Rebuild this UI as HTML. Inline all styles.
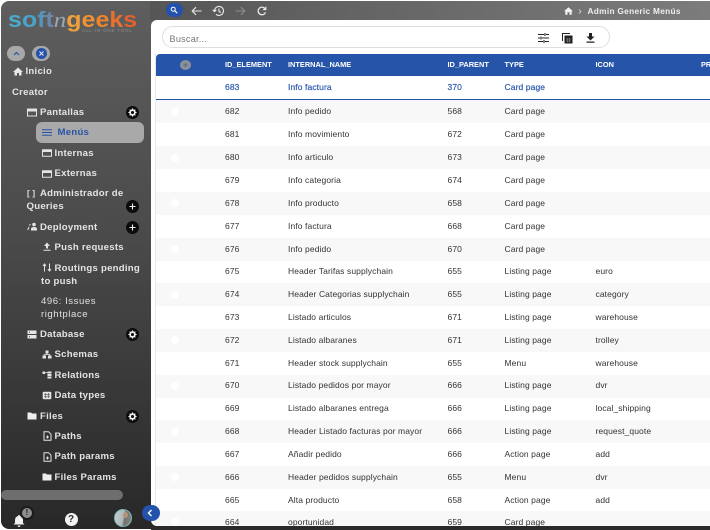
<!DOCTYPE html>
<html lang="es"><head><meta charset="utf-8"><title>Admin Generic Menús</title>
<style>
*{box-sizing:border-box}
html,body{margin:0;padding:0;background:#fff}
#f{position:relative;width:710px;height:530px;overflow:hidden;font-family:"Liberation Sans",sans-serif;background:#fff}
#bg{position:absolute;left:1px;top:1px;width:720px;height:528px;border-radius:8px;background:linear-gradient(180deg,#5e5e5e 0,#4a4a4a 45%,#282828 100%)}
#top{position:absolute;left:150px;top:1px;width:560px;height:19px;background:linear-gradient(90deg,#565656,#7c7c7c)}
#panel{position:absolute;left:151px;top:20px;width:559px;height:506px;background:#fff;border-radius:6px 0 0 6px;overflow:hidden}
.a{position:absolute;white-space:nowrap}
.s{position:absolute;color:#e4e4e4;font-size:9.6px;font-weight:bold;line-height:13px;white-space:nowrap;letter-spacing:.25px}
.n{font-weight:normal;letter-spacing:.55px;color:#e0e0e0}
.r{position:absolute;left:156px;width:554px;height:23px}
.g{background:#f8f8f8}
.c{position:absolute;font-size:8.5px;line-height:10px;color:#333;white-space:nowrap;letter-spacing:.1px}
.h{position:absolute;font-size:7.4px;line-height:10px;color:#fff;font-weight:bold;white-space:nowrap;top:60px}
.b{color:#2f5cae;-webkit-text-stroke:.2px #2f5cae}
.w{position:absolute;left:171px;width:8px;height:8px;border-radius:50%;background:#fff}
svg{position:absolute;display:block}
.btn{position:absolute;width:13px;height:13px;border-radius:50%;background:#0c0c0c}
</style></head><body><div id="f">
<div id="bg"></div><div id="top"></div><div id="panel"></div>

<!-- logo -->
<div class="a" style="left:8px;top:5px;font-size:22.500px;line-height:30px;font-weight:bold;transform:scaleX(1.11);transform-origin:0 0"><span style="color:#4aa9cf">s</span><span style="color:#4aa3ca">o</span><span style="color:#5694bd">f</span><span style="color:#6b88ab">t</span><span style="font-family:'Liberation Serif',serif;font-style:italic;font-weight:normal;color:#9aa7b6">n</span><span style="color:#eea03a">g</span><span style="color:#ee9234">e</span><span style="color:#ec842f">e</span><span style="color:#e8722d">k</span><span style="color:#e2622c">s</span></div>
<div class="a" style="left:82px;top:28px;font-size:4.6px;line-height:6px;color:#8d8d8d;letter-spacing:.75px">ALL-IN-ONE TOOL</div>

<!-- top buttons -->
<div class="a" style="left:7px;top:46px;width:18px;height:15px;border-radius:8px;background:#a8a8a8"></div>
<svg style="left:13px;top:51px" width="7" height="5" viewBox="0 0 7 5"><path d="M1 4 3.500 1.500 6 4" fill="none" stroke="#2855a8" stroke-width="1.200"/></svg>
<div class="a" style="left:32px;top:46px;width:18px;height:15px;border-radius:8px;background:#a8a8a8"></div>
<div class="a" style="left:36px;top:48px;width:11px;height:11px;border-radius:50%;background:#2351ab"></div>
<svg style="left:38px;top:50px" width="7" height="7" viewBox="0 0 7 7"><path d="M1.500 1.500l4 4M5.500 1.500l-4 4" stroke="#dfe6f5" stroke-width="1.100"/></svg>

<!-- sidebar items -->
<svg style="left:13px;top:67px" width="10" height="9" viewBox="0 0 10 9"><path d="M5 .5 0 5h1.500v3.500h2.500V6h2v2.500h2.500V5H10z" fill="#e8e8e8"/></svg>
<div class="s" style="left:25.500px;top:65px">Inicio</div>
<div class="s" style="left:12px;top:85.500px">Creator</div>

<svg style="left:27px;top:108px" width="10" height="9" viewBox="0 0 10 9"><path d="M.5 1h9v7h-9z" fill="none" stroke="#e4e4e4" stroke-width="1"/><path d="M.5 1h9v2.500h-9z" fill="#e4e4e4"/></svg>
<div class="s" style="left:40px;top:105.500px">Pantallas</div>
<div class="btn" style="left:126px;top:106px"></div>
<svg style="left:128px;top:108px" width="9" height="9" viewBox="0 0 9 9"><circle cx="4.500" cy="4.500" r="2.400" fill="none" stroke="#eee" stroke-width="1.700"/><path d="M4.500.4v1.200M4.500 7.400v1.200M.4 4.500h1.200M7.400 4.500h1.200M1.600 1.600l.9.9M6.500 6.500l.9.9M1.600 7.400l.9-.9M6.500 2.500l.9-.9" stroke="#eee" stroke-width="1.100"/></svg>

<div class="a" style="left:36px;top:122px;width:108px;height:21px;border-radius:6px;background:#a9a9a9"></div>
<svg style="left:42px;top:129px" width="10" height="7" viewBox="0 0 10 7"><path d="M0 .8h10M0 3.500h10M0 6.200h10" stroke="#2855a8" stroke-width="1"/></svg>
<div class="s" style="left:57.500px;top:126px;color:#2855a8">Menús</div>

<svg style="left:41.500px;top:149px" width="10" height="8" viewBox="0 0 10 8"><path d="M.5.700h9v6.600h-9z" fill="none" stroke="#e4e4e4" stroke-width="1"/><path d="M.5.700h9v2.300h-9z" fill="#e4e4e4"/></svg>
<div class="s" style="left:54.500px;top:146.500px">Internas</div>
<svg style="left:41.500px;top:169.500px" width="10" height="8" viewBox="0 0 10 8"><path d="M.5.700h9v6.600h-9z" fill="none" stroke="#e4e4e4" stroke-width="1"/><path d="M.5.700h9v2.300h-9z" fill="#e4e4e4"/></svg>
<div class="s" style="left:54.500px;top:167px">Externas</div>

<div class="s" style="left:27px;top:187px;font-size:8px">[ ]</div>
<div class="s" style="left:40px;top:187px">Administrador de</div>
<div class="s" style="left:26.500px;top:200px">Queries</div>
<div class="btn" style="left:126px;top:200px"></div>
<svg style="left:128px;top:202px" width="9" height="9" viewBox="0 0 9 9"><path d="M4.500 1.500v6M1.500 4.500h6" stroke="#eee" stroke-width="1.100"/></svg>

<svg style="left:27px;top:222px" width="11" height="9" viewBox="0 0 11 9"><circle cx="7" cy="2.500" r="1.800" fill="#e4e4e4"/><path d="M4 8.500V7q0-2 3-2t3 2v1.500z" fill="#e4e4e4"/><path d="M.7 8 2 5M2.500 3.500 3.200 2" stroke="#e4e4e4" stroke-width="1"/></svg>
<div class="s" style="left:40px;top:220.500px">Deployment</div>
<div class="btn" style="left:126px;top:220.500px"></div>
<svg style="left:128px;top:222.500px" width="9" height="9" viewBox="0 0 9 9"><path d="M4.500 1.500v6M1.500 4.500h6" stroke="#eee" stroke-width="1.100"/></svg>

<svg style="left:43px;top:242px" width="8" height="9" viewBox="0 0 8 9"><path d="M4 .5 7 4H5v2.500H3V4H1zM.5 7.700h7v1h-7z" fill="#e4e4e4"/></svg>
<div class="s" style="left:54.500px;top:241px">Push requests</div>

<svg style="left:42px;top:263px" width="10" height="9" viewBox="0 0 10 9"><path d="M2.500 8.500v-7M1 3l1.500-2L4 3M7.500.500v7M6 6l1.500 2L9 6" fill="none" stroke="#e4e4e4" stroke-width="1"/></svg>
<div class="s" style="left:54.500px;top:261.500px">Routings pending</div>
<div class="s" style="left:41px;top:274.500px">to push</div>
<div class="s n" style="left:41px;top:294.500px">496: Issues</div>
<div class="s n" style="left:41px;top:307.500px">rightplace</div>

<svg style="left:27px;top:329.500px" width="10" height="9" viewBox="0 0 10 9"><path d="M.5.500h9v3.500h-9zM.5 5h9v3.500h-9z" fill="#e8e8e8"/><path d="M2 2.200h1M2 6.700h1" stroke="#444"/></svg>
<div class="s" style="left:40px;top:327.500px">Database</div>
<div class="btn" style="left:126px;top:328px"></div>
<svg style="left:128px;top:330px" width="9" height="9" viewBox="0 0 9 9"><circle cx="4.500" cy="4.500" r="2.400" fill="none" stroke="#eee" stroke-width="1.700"/><path d="M4.500.4v1.200M4.500 7.400v1.200M.4 4.500h1.200M7.400 4.500h1.200M1.600 1.600l.9.9M6.500 6.500l.9.9M1.600 7.400l.9-.9M6.500 2.500l.9-.9" stroke="#eee" stroke-width="1.100"/></svg>

<svg style="left:42px;top:350px" width="10" height="9" viewBox="0 0 10 9"><path d="M3.500.500h3v3h-3zM.5 5.500h3.500v3H.5zM6 5.500h3.500v3H6z" fill="#e4e4e4"/><path d="M5 3v2M2.200 5.500V4.500h5.600v1" fill="none" stroke="#e4e4e4" stroke-width=".8"/></svg>
<div class="s" style="left:54.500px;top:348px">Schemas</div>
<svg style="left:42px;top:371px" width="10" height="8" viewBox="0 0 10 8"><path d="M.5.500h2.500v2.500H.5zM5.500.500h4v2H5.500zM5.500 3h4v2H5.500zM5.500 5.500h4v2H5.500z" fill="#e4e4e4"/><path d="M3 1.700h2.500" stroke="#e4e4e4" stroke-width=".8"/></svg>
<div class="s" style="left:54.500px;top:368.500px">Relations</div>
<svg style="left:42px;top:391px" width="10" height="9" viewBox="0 0 10 9"><rect x=".7" y=".7" width="8.600" height="7.600" rx="1" fill="#e4e4e4"/><path d="M2 3.300h6M2 5.800h6M3.700 2v5M6.500 2v5" stroke="#555" stroke-width=".7"/></svg>
<div class="s" style="left:54.500px;top:389px">Data types</div>

<svg style="left:27px;top:411.500px" width="10" height="8" viewBox="0 0 10 8"><path d="M.5.500h3.500l1 1h4.500v6h-9z" fill="#eee"/></svg>
<div class="s" style="left:40px;top:409.500px">Files</div>
<div class="btn" style="left:126px;top:409.500px"></div>
<svg style="left:128px;top:411.500px" width="9" height="9" viewBox="0 0 9 9"><circle cx="4.500" cy="4.500" r="2.400" fill="none" stroke="#eee" stroke-width="1.700"/><path d="M4.500.4v1.200M4.500 7.400v1.200M.4 4.500h1.200M7.400 4.500h1.200M1.600 1.600l.9.9M6.500 6.500l.9.9M1.600 7.400l.9-.9M6.500 2.500l.9-.9" stroke="#eee" stroke-width="1.100"/></svg>

<svg style="left:42.500px;top:431px" width="9" height="10" viewBox="0 0 9 10"><path d="M1 .7h4.500L8 3.200v6H1zM3 6h3M4.500 4.500v3" fill="none" stroke="#e4e4e4" stroke-width="1"/></svg>
<div class="s" style="left:54.500px;top:429.500px">Paths</div>
<svg style="left:42.500px;top:451.500px" width="9" height="10" viewBox="0 0 9 10"><path d="M1 .7h4.500L8 3.200v6H1zM3 6h3M4.500 4.500v3" fill="none" stroke="#e4e4e4" stroke-width="1"/></svg>
<div class="s" style="left:54.500px;top:450px">Path params</div>
<svg style="left:41.500px;top:472.500px" width="10" height="8" viewBox="0 0 10 8"><path d="M.5.500h3.500l1 1h4.500v6h-9z" fill="#eee"/></svg>
<div class="s" style="left:54.500px;top:470.500px">Files Params</div>

<!-- scroll -->
<div class="a" style="left:1px;top:490px;width:122px;height:10px;border-radius:5px;background:#6e6e6e"></div>

<!-- footer -->
<svg style="left:13px;top:514px" width="12" height="13" viewBox="0 0 12 13"><path d="M6 1a1 1 0 0 1 1 1q3 1 3 4v3l1.500 1.500H.5L2 9V6q0-3 3-4a1 1 0 0 1 1-1zM4.500 11.500h3Q7.300 13 6 13t-1.500-1.500z" fill="#f0f0f0"/></svg>
<div class="a" style="left:20px;top:506px;width:14px;height:14px;border-radius:50%;background:#1b1b1b"></div>
<div class="a" style="left:22px;top:508px;width:10px;height:10px;border-radius:50%;background:#8e8e8e"></div>
<div class="a" style="left:22px;top:508px;width:10px;height:10px;font-size:8px;line-height:10px;font-weight:bold;color:#222;text-align:center">!</div>
<div class="a" style="left:64.500px;top:513px;width:13px;height:13px;border-radius:50%;background:#f2f2f2;color:#2a2a2a;font-size:10px;line-height:13px;font-weight:bold;text-align:center">?</div>
<div class="a" style="left:114px;top:509px;width:18px;height:18px;border-radius:50%;background:linear-gradient(100deg,#c4cfd0 0,#aeb8b8 50%,#6d7470 60%,#8a8580 100%);border:1px solid #7fb7b5"></div>
<div class="a" style="left:122.500px;top:512px;width:5px;height:6px;border-radius:50%;background:#b5927c"></div>

<!-- top bar -->
<div class="a" style="left:165.500px;top:3px;width:17px;height:14px;border-radius:7px;background:#2351ab"></div>
<svg style="left:170px;top:6px" width="8" height="8" viewBox="0 0 8 8"><circle cx="3.200" cy="3.200" r="2" fill="none" stroke="#fff" stroke-width="1"/><path d="M4.700 4.700 7.200 7.200" stroke="#fff" stroke-width="1.100"/></svg>
<svg style="left:191px;top:6px" width="11" height="10" viewBox="0 0 11 10"><path d="M10.500 5H1.500M5 1.200 1.200 5 5 8.800" fill="none" stroke="#e8e8e8" stroke-width="1.100"/></svg>
<svg style="left:212px;top:5px" width="13" height="12" viewBox="0 0 13 12"><path d="M2.500 6a4.500 4.500 0 1 1 1.500 3.300M.7 4.800l1.800 1.800 1.800-1.800M7 3.500V6.500l2 1" fill="none" stroke="#e8e8e8" stroke-width="1.100"/></svg>
<svg style="left:235px;top:6px" width="11" height="10" viewBox="0 0 11 10"><path d="M.5 5h9M6 1.200 9.800 5 6 8.800" fill="none" stroke="#8e8e8e" stroke-width="1.100"/></svg>
<svg style="left:257px;top:6px" width="10" height="10" viewBox="0 0 10 10"><path d="M8.500 6.300A3.800 3.800 0 1 1 8 2.700M8.800.8v2.700H6.100" fill="none" stroke="#ededed" stroke-width="1.200"/></svg>
<svg style="left:564px;top:7px" width="9" height="8" viewBox="0 0 9 8"><path d="M4.500.3 0 4.200h1.300v3.500h2.200V5.200h2v2.500h2.200V4.200H9z" fill="#f2f2f2"/></svg>
<svg style="left:578px;top:9px" width="4" height="5" viewBox="0 0 4 5"><path d="M1 .5 3 2.500 1 4.500" fill="none" stroke="#ddd" stroke-width=".8"/></svg>
<div class="a" style="left:587.500px;top:6px;font-size:8.300px;line-height:11px;font-weight:bold;color:#eee;letter-spacing:.3px">Admin Generic Menús</div>

<!-- search -->
<div class="a" style="left:162px;top:26px;width:448px;height:22px;border:1px solid #dedede;border-radius:11px;background:#fff"></div>
<div class="a" style="left:169.500px;top:33px;font-size:9.100px;line-height:12px;color:#757575;letter-spacing:.25px">Buscar...</div>
<svg style="left:538px;top:33px" width="11" height="10" viewBox="0 0 11 10"><path d="M0 1.500h6M8 1.500h3M7 0v3M0 5h2M4 5h7M3 3.500v3M0 8.500h5M7 8.500h4M6 7v3" stroke="#222" stroke-width="1.100"/></svg>
<svg style="left:562px;top:33px" width="11" height="11" viewBox="0 0 11 11"><path d="M2.500 2.500h8v8h-8z" fill="#222"/><path d="M.5 8V.5H8" fill="none" stroke="#222"/><path d="M4 6h5M4 8h5M5.700 5v4.500M7.500 5v4.500" stroke="#999" stroke-width=".5"/></svg>
<svg style="left:586px;top:33px" width="9" height="10" viewBox="0 0 9 10"><path d="M3 0h3v3.500h2.500L4.500 7.500.5 3.500H3zM.5 8.500h8v1.200h-8z" fill="#222"/></svg>

<!-- left hairline -->
<div class="a" style="left:155px;top:54px;width:1px;height:472px;background:#e8e8e8"></div>

<!-- header -->
<div class="a" style="left:156px;top:54px;width:554px;height:22px;background:#2654a8;border-radius:4px 0 0 0"></div>
<div class="a" style="left:180px;top:60px;width:11px;height:10px;border-radius:50%;background:#8a8f9a"></div>
<svg style="left:182px;top:62px" width="7" height="6" viewBox="0 0 7 6"><path d="M1.500 3h4M3.500 1v4" stroke="#5e6b85"/></svg>
<div class="h" style="left:225px">ID_ELEMENT</div>
<div class="h" style="left:288px">INTERNAL_NAME</div>
<div class="h" style="left:447.500px">ID_PARENT</div>
<div class="h" style="left:504.500px">TYPE</div>
<div class="h" style="left:595.500px">ICON</div>
<div class="h" style="left:701px">PR</div>

<!-- selected row -->
<div class="a" style="left:156px;top:99px;width:554px;height:1px;background:#2654a8"></div>
<div class="c b" style="left:225px;top:82px">683</div>
<div class="c b" style="left:288px;top:82px">Info factura</div>
<div class="c b" style="left:447.500px;top:82px">370</div>
<div class="c b" style="left:504.500px;top:82px">Card page</div>

<!-- zebra -->
<div class="r g" style="top:100px"></div>
<div class="r g" style="top:146px"></div>
<div class="r g" style="top:192px"></div>
<div class="r g" style="top:237.500px"></div>
<div class="r g" style="top:283px"></div>
<div class="r g" style="top:329px"></div>
<div class="r g" style="top:374.500px"></div>
<div class="r g" style="top:420px"></div>
<div class="r g" style="top:466px"></div>
<div class="r g" style="top:511px;height:15px"></div>

<!-- faint gears -->
<div class="w" style="top:108px"></div>
<div class="w" style="top:154px"></div>
<div class="w" style="top:199px"></div>
<div class="w" style="top:245px"></div>
<div class="w" style="top:291px"></div>
<div class="w" style="top:336px"></div>
<div class="w" style="top:382px"></div>
<div class="w" style="top:428px"></div>
<div class="w" style="top:473px"></div>
<div class="w" style="top:518px"></div>

<!-- rows -->
<div class="c" style="left:225px;top:106px">682</div><div class="c" style="left:288px;top:106px">Info pedido</div><div class="c" style="left:447.500px;top:106px">568</div><div class="c" style="left:504.500px;top:106px">Card page</div>
<div class="c" style="left:225px;top:129px">681</div><div class="c" style="left:288px;top:129px">Info movimiento</div><div class="c" style="left:447.500px;top:129px">672</div><div class="c" style="left:504.500px;top:129px">Card page</div>
<div class="c" style="left:225px;top:152px">680</div><div class="c" style="left:288px;top:152px">Info articulo</div><div class="c" style="left:447.500px;top:152px">673</div><div class="c" style="left:504.500px;top:152px">Card page</div>
<div class="c" style="left:225px;top:175px">679</div><div class="c" style="left:288px;top:175px">Info categoria</div><div class="c" style="left:447.500px;top:175px">674</div><div class="c" style="left:504.500px;top:175px">Card page</div>
<div class="c" style="left:225px;top:198px">678</div><div class="c" style="left:288px;top:198px">Info producto</div><div class="c" style="left:447.500px;top:198px">658</div><div class="c" style="left:504.500px;top:198px">Card page</div>
<div class="c" style="left:225px;top:221px">677</div><div class="c" style="left:288px;top:221px">Info factura</div><div class="c" style="left:447.500px;top:221px">668</div><div class="c" style="left:504.500px;top:221px">Card page</div>
<div class="c" style="left:225px;top:244px">676</div><div class="c" style="left:288px;top:244px">Info pedido</div><div class="c" style="left:447.500px;top:244px">670</div><div class="c" style="left:504.500px;top:244px">Card page</div>
<div class="c" style="left:225px;top:266px">675</div><div class="c" style="left:288px;top:266px">Header Tarifas supplychain</div><div class="c" style="left:447.500px;top:266px">655</div><div class="c" style="left:504.500px;top:266px">Listing page</div><div class="c" style="left:595.500px;top:266px">euro</div>
<div class="c" style="left:225px;top:289px">674</div><div class="c" style="left:288px;top:289px">Header Categorias supplychain</div><div class="c" style="left:447.500px;top:289px">655</div><div class="c" style="left:504.500px;top:289px">Listing page</div><div class="c" style="left:595.500px;top:289px">category</div>
<div class="c" style="left:225px;top:312px">673</div><div class="c" style="left:288px;top:312px">Listado articulos</div><div class="c" style="left:447.500px;top:312px">671</div><div class="c" style="left:504.500px;top:312px">Listing page</div><div class="c" style="left:595.500px;top:312px">warehouse</div>
<div class="c" style="left:225px;top:335px">672</div><div class="c" style="left:288px;top:335px">Listado albaranes</div><div class="c" style="left:447.500px;top:335px">671</div><div class="c" style="left:504.500px;top:335px">Listing page</div><div class="c" style="left:595.500px;top:335px">trolley</div>
<div class="c" style="left:225px;top:358px">671</div><div class="c" style="left:288px;top:358px">Header stock supplychain</div><div class="c" style="left:447.500px;top:358px">655</div><div class="c" style="left:504.500px;top:358px">Menu</div><div class="c" style="left:595.500px;top:358px">warehouse</div>
<div class="c" style="left:225px;top:380px">670</div><div class="c" style="left:288px;top:380px">Listado pedidos por mayor</div><div class="c" style="left:447.500px;top:380px">666</div><div class="c" style="left:504.500px;top:380px">Listing page</div><div class="c" style="left:595.500px;top:380px">dvr</div>
<div class="c" style="left:225px;top:403px">669</div><div class="c" style="left:288px;top:403px">Listado albaranes entrega</div><div class="c" style="left:447.500px;top:403px">666</div><div class="c" style="left:504.500px;top:403px">Listing page</div><div class="c" style="left:595.500px;top:403px">local_shipping</div>
<div class="c" style="left:225px;top:426px">668</div><div class="c" style="left:288px;top:426px">Header Listado facturas por mayor</div><div class="c" style="left:447.500px;top:426px">666</div><div class="c" style="left:504.500px;top:426px">Listing page</div><div class="c" style="left:595.500px;top:426px">request_quote</div>
<div class="c" style="left:225px;top:449px">667</div><div class="c" style="left:288px;top:449px">Añadir pedido</div><div class="c" style="left:447.500px;top:449px">666</div><div class="c" style="left:504.500px;top:449px">Action page</div><div class="c" style="left:595.500px;top:449px">add</div>
<div class="c" style="left:225px;top:472px">666</div><div class="c" style="left:288px;top:472px">Header pedidos supplychain</div><div class="c" style="left:447.500px;top:472px">655</div><div class="c" style="left:504.500px;top:472px">Menu</div><div class="c" style="left:595.500px;top:472px">dvr</div>
<div class="c" style="left:225px;top:495px">665</div><div class="c" style="left:288px;top:495px">Alta producto</div><div class="c" style="left:447.500px;top:495px">658</div><div class="c" style="left:504.500px;top:495px">Action page</div><div class="c" style="left:595.500px;top:495px">add</div>
<div class="c" style="left:225px;top:517px">664</div><div class="c" style="left:288px;top:517px">oportunidad</div><div class="c" style="left:447.500px;top:517px">659</div><div class="c" style="left:504.500px;top:517px">Card page</div>
<div class="a" style="left:151px;top:526px;width:559px;height:4px;background:#2a2a2a"></div>
<div class="a" style="left:141.500px;top:505px;width:18px;height:16px;border-radius:8px;background:#2351ab"></div>
<svg style="left:147px;top:509px" width="6" height="8" viewBox="0 0 6 8"><path d="M4.500 1 1.500 4l3 3" fill="none" stroke="#fff" stroke-width="1.400"/></svg>
</div></body></html>
